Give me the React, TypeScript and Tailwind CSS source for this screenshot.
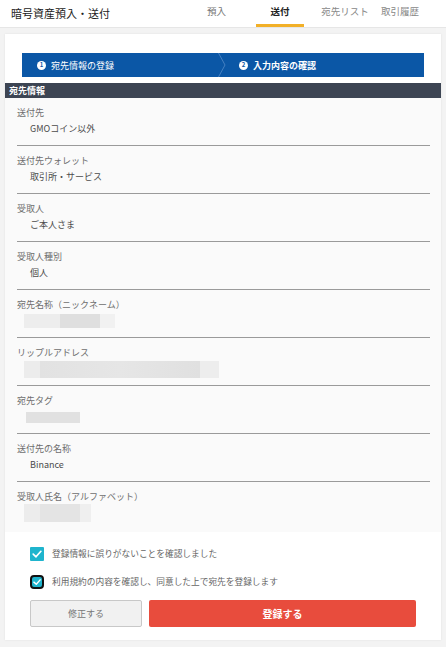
import * as React from "react";

type Field = {
  label: string;
  value?: string;
  blur?: "nick" | "address" | "tag" | "name";
};

const fields: Field[] = [
  { label: "送付先", value: "GMOコイン以外" },
  { label: "送付先ウォレット", value: "取引所・サービス" },
  { label: "受取人", value: "ご本人さま" },
  { label: "受取人種別", value: "個人" },
  { label: "宛先名称（ニックネーム）", blur: "nick" },
  { label: "リップルアドレス", blur: "address" },
  { label: "宛先タグ", blur: "tag" },
  { label: "送付先の名称", value: "Binance" },
  { label: "受取人氏名（アルファベット）", blur: "name" },
];

function Blur({ kind }: { kind: NonNullable<Field["blur"]> }) {
  if (kind === "nick") {
    return (
      <div className="ml-[7px] flex h-[14px] w-[91px]">
        <div className="h-full w-[36px] bg-[#ededed]" />
        <div className="h-full w-[40px] bg-[#dfdfdf]" />
        <div className="h-full w-[15px] bg-[#f1f1f1]" />
      </div>
    );
  }
  if (kind === "address") {
    return (
      <div className="ml-[7px] flex h-[17px] w-[195px]">
        <div className="h-full w-[16px] bg-[#ececec]" />
        <div className="h-full w-[160px] bg-linear-to-r from-[#e2e2e2] via-[#e6e6e6] to-[#e0e0e0]" />
        <div className="h-full w-[19px] bg-[#ededed]" />
      </div>
    );
  }
  if (kind === "tag") {
    return <div className="ml-[9px] h-[11px] w-[54px] bg-[#e1e1e1]" />;
  }
  return (
    <div className="ml-[7px] flex h-[18px] w-[67px]">
      <div className="h-full w-[16px] bg-[#ececec]" />
      <div className="h-full w-[40px] bg-[#e4e4e4]" />
      <div className="h-full w-[11px] bg-[#efefef]" />
    </div>
  );
}

function Check({ focused }: { focused?: boolean }) {
  const box = (
    <span className="flex h-[14px] w-[14px] items-center justify-center rounded-[1px] bg-[#1fb4cd]">
      <svg viewBox="0 0 14 14" className="h-[14px] w-[14px]">
        <path
          d="M3.2 7.2 L6 9.8 L10.9 4.3"
          fill="none"
          stroke="#fff"
          strokeWidth="1.7"
          strokeLinecap="round"
          strokeLinejoin="round"
        />
      </svg>
    </span>
  );
  if (!focused) return box;
  return (
    <span className="flex h-[14px] w-[14px] items-center justify-center rounded-[4px] border-2 border-[#111] bg-[#1fb4cd]">
      <svg viewBox="0 0 14 14" className="h-[10px] w-[10px]">
        <path
          d="M2.6 7.2 L6 10.2 L11.4 4"
          fill="none"
          stroke="#fff"
          strokeWidth="2"
          strokeLinecap="round"
          strokeLinejoin="round"
        />
      </svg>
    </span>
  );
}

export default function App() {
  return (
    <div
      className="min-h-[647px] w-[446px] bg-[#f3f3f3] text-[#444]"
      style={{ fontFamily: '"Noto Sans CJK JP", "Noto Sans", sans-serif' }}
    >
      <header className="flex h-[28px] items-stretch border-b border-[#e6e6e6] bg-white">
        <h1 className="ml-[11px] flex items-center text-[11px] leading-none text-[#222]">
          暗号資産預入・送付
        </h1>
        <nav className="ml-auto flex items-stretch text-[9.5px] leading-none">
          <a className="flex w-[47px] items-center justify-center border-b-[3px] border-transparent text-[#777]">
            預入
          </a>
          <a className="ml-[16px] flex w-[48px] items-center justify-center border-b-[3px] border-[#f2b028] font-bold text-[#222]">
            送付
          </a>
          <a className="ml-[10px] flex w-[62px] items-center justify-center border-b-[3px] border-transparent text-[#888]">
            宛先リスト
          </a>
          <a className="mr-[22px] flex w-[48px] items-center justify-center border-b-[3px] border-transparent text-[#888]">
            取引履歴
          </a>
        </nav>
      </header>

      <main className="mx-[5px] mt-[6px] w-[436px] bg-white pb-[13px] shadow-[0_0_2px_rgba(0,0,0,0.08)]">
        <div className="px-[17px] pt-[19px]">
          <div className="flex h-[24px] items-center bg-[#0b57a6] text-[9px] leading-none text-white">
            <div className="flex w-[196px] items-center pl-[15px]">
              <span className="mr-[5px] flex h-[9px] w-[9px] items-center justify-center rounded-full bg-white text-[6px] font-bold text-[#0b57a6]">
                1
              </span>
              宛先情報の登録
            </div>
            <svg viewBox="0 0 8 24" className="h-[24px] w-[8px]">
              <path d="M0.5 0 L7 12 L0.5 24" fill="none" stroke="#4c86c4" strokeWidth="0.9" />
            </svg>
            <div className="flex items-center pl-[13px] font-bold">
              <span className="mr-[5px] flex h-[9px] w-[9px] items-center justify-center rounded-full bg-white text-[6px] font-bold text-[#0b57a6]">
                2
              </span>
              入力内容の確認
            </div>
          </div>
        </div>

        <div className="mt-[6px] flex h-[15px] items-center bg-[#3d4553] pl-[4px] text-[9px] font-bold leading-none text-white">
          宛先情報
        </div>

        <div className="bg-[#fafafa] pl-[12px] pr-[11px] pb-[5px]">
          {fields.map((f, i) => (
            <div
              key={f.label}
              className={
                i === fields.length - 1
                  ? "pt-[9px] pb-[8px]"
                  : "border-b border-[#9a9a9a] pt-[9px] pb-[10px]"
              }
            >
              <div className="h-[12px] text-[9px] leading-[12px] text-[#6e6e6e]">{f.label}</div>
              <div className="mt-[4px] flex h-[12px] items-center text-[9px] leading-[12px] text-[#4c4c4c]">
                {f.blur ? (
                  <Blur kind={f.blur} />
                ) : (
                  <span className="pl-[13px]">{f.value}</span>
                )}
              </div>
            </div>
          ))}
        </div>

        <div className="px-[25px] pt-[15px]">
          <label className="flex h-[14px] items-center gap-[8px] text-[8.7px] leading-none text-[#666]">
            <Check />
            登録情報に誤りがないことを確認しました
          </label>
          <label className="mt-[14px] flex h-[14px] items-center gap-[8px] text-[8.7px] leading-none text-[#666]">
            <Check focused />
            利用規約の内容を確認し、同意した上で宛先を登録します
          </label>
          <div className="mt-[11px] flex gap-[7px]">
            <button className="h-[27px] w-[112px] rounded-[2px] border border-[#c8c8c8] bg-[#f1f1f1] text-[9px] text-[#777]">
              修正する
            </button>
            <button className="h-[27px] flex-1 rounded-[2px] bg-[#e84c3d] text-[10px] font-bold text-white">
              登録する
            </button>
          </div>
        </div>
      </main>
    </div>
  );
}
